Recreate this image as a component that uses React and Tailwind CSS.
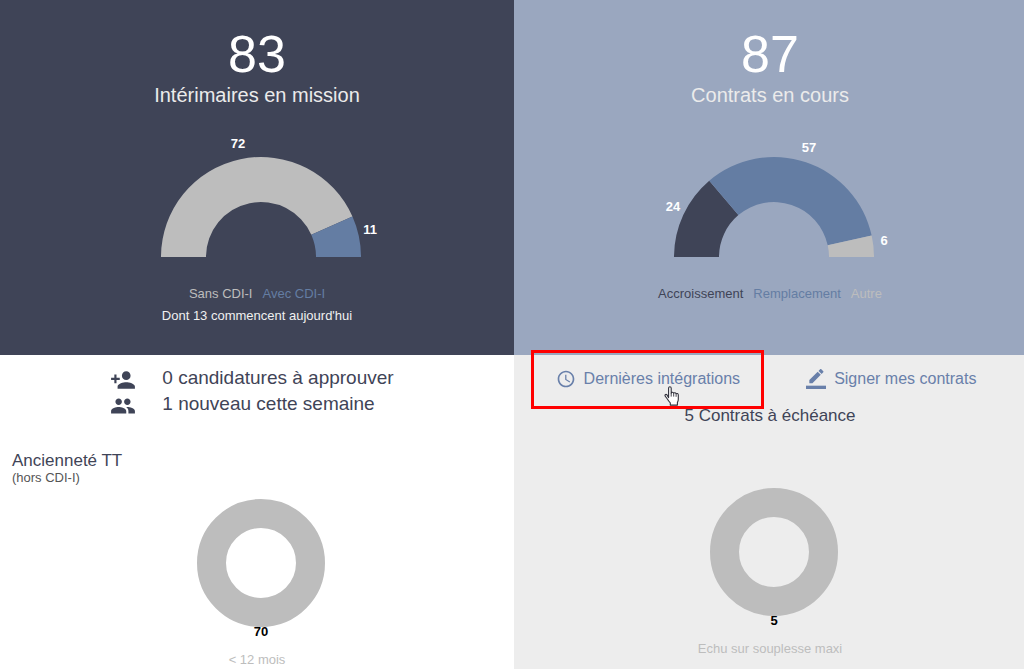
import { MdAccessTime, MdPeople, MdPersonAdd } from "react-icons/md";

const missions = [
  { name: "Sans CDI-I", value: 72, fill: "fill-[#bdbdbd]", text: "text-[#bdbdbd]", x: -23, y: -109 },
  { name: "Avec CDI-I", value: 11, fill: "fill-[#647da3]", text: "text-[#647da3]", x: 109, y: -23 },
];

const contrats = [
  { name: "Accroissement", value: 24, fill: "fill-[#3f4457]", text: "text-[#3f4457]", x: -101, y: -46 },
  { name: "Remplacement", value: 57, fill: "fill-[#647da3]", text: "text-[#647da3]", x: 35, y: -105 },
  { name: "Autre", value: 6, fill: "fill-[#bdbdbd]", text: "text-[#bdbdbd]", x: 110, y: -12 },
];

// angle 0 = left end of the half circle, Math.PI = right end
function point(r, angle) {
  return `${-r * Math.cos(angle)} ${-r * Math.sin(angle)}`;
}

function slicePath(from, to) {
  return `M${point(100, from)} A100 100 0 0 1 ${point(100, to)} L${point(55, to)} A55 55 0 0 0 ${point(55, from)} Z`;
}

function HalfDonut({ data, label }) {
  const total = data.reduce((sum, d) => sum + d.value, 0);
  let start = 0;
  return (
    <svg width="260" height="173" viewBox="-134 -147 260 173" role="img" aria-label={label}>
      {data.map((d) => {
        const from = start;
        start += (d.value / total) * Math.PI;
        return <path key={d.name} className={d.fill} d={slicePath(from, start)} />;
      })}
      {data.map((d) => (
        <text key={d.name} x={d.x} y={d.y} textAnchor="middle" className="fill-white text-[13px] font-bold">
          {d.value}
        </text>
      ))}
    </svg>
  );
}

function Donut({ value, label }) {
  return (
    <svg width="200" height="166" viewBox="-104 -78 200 166" role="img" aria-label={label}>
      <circle r="49.5" fill="none" strokeWidth="29" className="stroke-[#bdbdbd]" />
      <text x="0" y="73" textAnchor="middle" className="fill-black text-[13px] font-bold">
        {value}
      </text>
    </svg>
  );
}

function Summary({ total, title, data, className, children }) {
  return (
    <section className={"flex flex-col items-center pt-7 pb-7 " + className}>
      <p className="text-[52px] leading-[52px] text-white">{total}</p>
      <h2 className="text-xl leading-[30px] text-[#ebebeb]">{title}</h2>
      <HalfDonut data={data} label={title} />
      <ul className="flex gap-[10px] text-[13px] leading-[22px]">
        {data.map((d) => (
          <li key={d.name} className={d.text}>
            {d.name}
          </li>
        ))}
      </ul>
      {children}
    </section>
  );
}

function SignIcon() {
  return (
    <svg width="20" height="20" viewBox="0 0 24 24" fill="currentColor" aria-hidden="true">
      <path d="M17.75 7L14 3.25l-10 10V17h3.75l10-10zm2.96-2.96c.39-.39.39-1.02 0-1.41L18.37.29c-.39-.39-1.02-.39-1.41 0L15 2.25 18.75 6l1.96-1.96z" />
      <path d="M0 20h24v4H0z" />
    </svg>
  );
}

function HandCursor() {
  return (
    <svg
      width="16"
      height="20"
      viewBox="0 0 16 20"
      className="absolute -bottom-[15px] left-[108px] z-10"
      aria-hidden="true"
    >
      <path
        d="M4.6 11.6V2.2c0-1.9 2.6-1.9 2.6 0v4.9c.2-1.2 2.3-1.1 2.5.3.4-1 2.2-.8 2.4.5.6-.8 2.2-.5 2.2 1v4.4c0 1.5-.4 2.3-.9 3.2v2.6H6.3v-2.2c-1.3-1.2-2.2-2.6-3.1-4.1-.6-1.1-1.3-1.9-1.9-2.6-1-1.2.5-2.3 1.6-1.4z"
        className="fill-white stroke-[#30303a]"
        strokeWidth="1.1"
        strokeLinejoin="round"
      />
      <path d="M7.2 7v3.6M9.7 7.6v3M12.1 8.2v2.6" fill="none" className="stroke-[#30303a]" strokeWidth="0.9" />
    </svg>
  );
}

function App() {
  return (
    <main className="grid min-h-screen grid-cols-[257fr_255fr] grid-rows-[auto_1fr] font-['Liberation_Sans',Arial,sans-serif]">
      <Summary total={83} title="Intérimaires en mission" data={missions} className="bg-[#3f4457]">
        <p className="text-[13px] leading-[22px] text-[#f0f0f0]">Dont 13 commencent aujourd'hui</p>
      </Summary>

      <Summary total={87} title="Contrats en cours" data={contrats} className="bg-[#9aa7bf] pl-[2px]" />

      {/* Intérimaires */}
      <section className="bg-white pt-3 text-[#3f4457]">
        <div className="flex justify-center pr-[10px]">
          <ul className="text-[19px] leading-[22px]">
            <li className="flex items-start gap-[26px]">
              <MdPersonAdd size={26} />
              0 candidatures à approuver
            </li>
            <li className="flex items-start gap-[26px]">
              <MdPeople size={26} />
              1 nouveau cette semaine
            </li>
          </ul>
        </div>
        <div className="mt-8 pl-3">
          <h3 className="text-[17px] leading-5">Ancienneté TT</h3>
          <p className="text-[13px] leading-[14px] text-[#555555]">(hors CDI-I)</p>
        </div>
        <div className="flex flex-col items-center">
          <Donut value={70} label="Ancienneté TT" />
          <p className="text-[13px] leading-[18px] text-[#bdbdbd]">&lt; 12 mois</p>
        </div>
      </section>

      {/* Contrats */}
      <section className="flex flex-col items-center bg-[#ededed] pt-3 pl-[2px] text-[#3f4457]">
        <div className="flex gap-[66px] pr-2 leading-6 text-[#6980aa]">
          <a href="#integrations" className="relative flex items-center gap-2 whitespace-nowrap">
            <MdAccessTime size={20} />
            Dernières intégrations
            <span className="absolute -top-[17px] -right-6 -bottom-[18px] -left-[25px] border-3 border-[#ff0000]"></span>
            <HandCursor />
          </a>
          <a href="#signer" className="flex items-center gap-2 whitespace-nowrap">
            <SignIcon />
            Signer mes contrats
          </a>
        </div>
        <h3 className="mt-[13px] text-[17px] leading-6">5 Contrats à échéance</h3>
        <div className="mt-[46px] flex flex-col items-center">
          <Donut value={5} label="Contrats à échéance" />
          <p className="text-[13px] leading-[18px] text-[#bdbdbd]">Echu sur souplesse maxi</p>
        </div>
      </section>
    </main>
  );
}

export default App;
